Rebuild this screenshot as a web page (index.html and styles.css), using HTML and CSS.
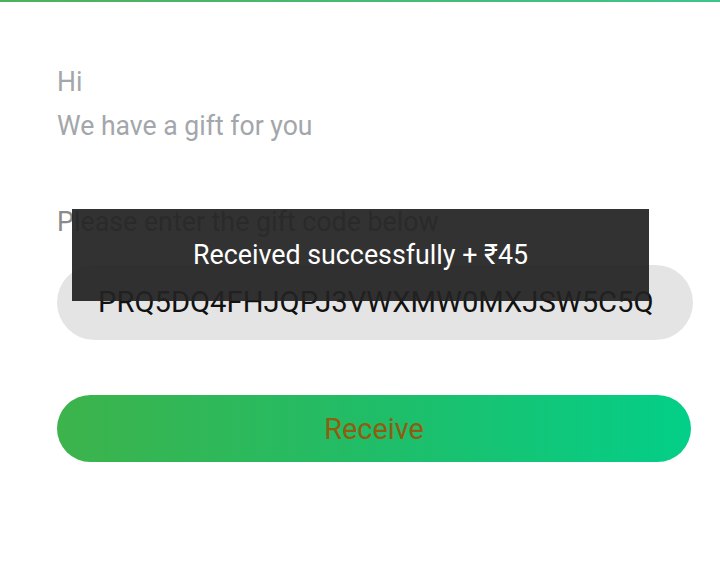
FILE: index.html
```html
<!DOCTYPE html>
<html>
<head>
<meta charset="utf-8">
<link rel="stylesheet" href="styles.css">
</head>
<body>
<div class="topline"></div>
<main class="page">
  <p class="hi"><span class="tall">Hi</span></p>
  <p class="sub"><span class="tall">We have a gift for you</span></p>
  <p class="label"><span class="tall">Please enter the gift code below</span></p>
  <div class="field">
    <input class="code" type="text" readonly value="PRQ5DQ4FHJQPJ3VWXMW0MXJSW5C5QIJ">
  </div>
  <button class="receive"><span class="tall">Receive</span></button>
</main>
<div class="toast"><span class="tall">Received successfully + ₹45</span></div>
</body>
</html>
```
FILE: styles.css
```css
html, body {
  margin: 0;
  padding: 0;
  background: #ffffff;
  width: 720px;
  height: 570px;
  overflow: hidden;
  font-family: Roboto, "Liberation Sans", sans-serif;
}
.topline {
  height: 2px;
  background: linear-gradient(90deg, #4fb05a, #3fc48c);
}
.tall {
  display: inline-block;
  transform: scaleY(1.05);
}
.page {
  padding: 58px 27px 0 57px;
  display: flex;
  flex-direction: column;
}
.hi, .sub {
  margin: 0;
  font-size: 26.6px;
  line-height: 44px;
  color: #a3a6aa;
}
.label {
  margin: 54px 0 0 0;
  font-size: 26.8px;
  line-height: 40px;
  color: #8a8a8a;
}
.field {
  margin-top: 23px;
  height: 75px;
  border-radius: 38px;
  background: #e4e4e4;
  display: flex;
  align-items: center;
  padding: 0 38px 0 41px;
}
.code {
  flex: 1;
  min-width: 0;
  border: 0;
  outline: 0;
  background: transparent;
  padding: 0;
  margin-top: -2px;
  font-family: Roboto, "Liberation Sans", sans-serif;
  font-size: 29.2px;
  color: #111111;
}
.receive {
  margin: 55px 2px 0 0;
  height: 67px;
  border: 0;
  border-radius: 34px;
  background: linear-gradient(90deg, #3db34b, #20bd68 50%, #03cf88);
  color: #905c10;
  font-family: Roboto, "Liberation Sans", sans-serif;
  font-size: 28.8px;
  padding: 0;
}
.toast {
  position: absolute;
  left: 72px;
  top: 209px;
  width: 577px;
  height: 92px;
  background: rgba(34, 34, 34, 0.93);
  color: #ffffff;
  font-size: 26.8px;
  display: flex;
  justify-content: center;
  padding-top: 30px;
  box-sizing: border-box;
}
```
